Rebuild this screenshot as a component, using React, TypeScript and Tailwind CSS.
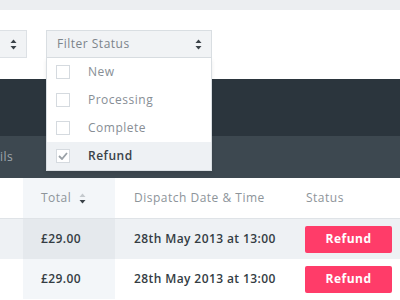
import React from "react";

const font = { fontFamily: "'Open Sans', 'Liberation Sans', sans-serif" };

function UpDown({ className = "" }: { className?: string }) {
  return (
    <svg width="7" height="11" viewBox="0 0 7 11" className={className}>
      <path d="M3.5 0.5 L6.5 4 L0.5 4 Z" fill="#3a4248" />
      <path d="M3.5 10.5 L6.5 7 L0.5 7 Z" fill="#3a4248" />
    </svg>
  );
}

const options = [
  { label: "New", checked: false },
  { label: "Processing", checked: false },
  { label: "Complete", checked: false },
  { label: "Refund", checked: true },
];

const rows = [
  { total: "£29.00", date: "28th May 2013 at 13:00", bg: "bg-[#eef1f4]", cell: "bg-[#e5e9ed]" },
  { total: "£29.00", date: "28th May 2013 at 13:00", bg: "bg-white", cell: "bg-[#f3f6f9]" },
];

export default function App() {
  return (
    <div className="w-[400px] h-[300px] overflow-hidden bg-white" style={font}>
      {/* top strip */}
      <div className="h-[10px] bg-[#eceef1]" />

      {/* filters */}
      <div className="relative h-[69px] pt-[20px] flex items-start gap-[19px]">
        <div className="w-[27px] h-[28px] bg-[#f1f3f5] border border-[#dde1e5] border-l-0 flex items-center justify-center">
          <UpDown />
        </div>
        <div className="relative w-[166px]">
          <div className="h-[28px] bg-[#f1f3f5] border border-[#d9dee2] flex items-center justify-between pl-[10px] pr-[9px]">
            <span className="text-[12px] tracking-[0.5px] text-[#7c848b]">Filter Status</span>
            <UpDown />
          </div>
          <div className="absolute left-0 top-[28px] z-10 w-[166px] bg-white border border-t-0 border-[#d9dee2] shadow-[0_2px_4px_rgba(0,0,0,0.08)]">
            {options.map((o) => (
              <div
                key={o.label}
                className={`h-[28px] flex items-center pl-[9px] ${o.checked ? "bg-[#eef1f4]" : ""}`}
              >
                <div className="w-[14px] h-[14px] border border-[#d5dadf] bg-white flex items-center justify-center">
                  {o.checked && (
                    <svg width="10" height="8" viewBox="0 0 10 8">
                      <path d="M1 4 L4 7 L9 1" stroke="#9aa1a7" strokeWidth="1.8" fill="none" />
                    </svg>
                  )}
                </div>
                <span
                  className={`ml-[18px] text-[12px] tracking-[0.5px] ${o.checked ? "text-[#3a4248] font-semibold" : "text-[#878e95]"}`}
                >
                  {o.label}
                </span>
              </div>
            ))}
          </div>
        </div>
      </div>

      {/* dark bands */}
      <div className="h-[57px] bg-[#2b353d]" />
      <div className="h-[42px] bg-[#3d4850] flex items-center">
        <span className="text-[12px] tracking-[0.5px] text-[#9ea6ad]">ils</span>
      </div>

      {/* table */}
      <div className="flex h-[41px] border-b border-[#dfe3e7] text-[12px] tracking-[0.5px] text-[#8d949a]">
        <div className="w-[23px]" />
        <div className="w-[92px] bg-[#f3f6f9] flex items-center pl-[18px]">
          <span>Total</span>
          <svg width="7" height="11" viewBox="0 0 7 11" className="ml-[8px]">
            <path d="M3.5 0.5 L6.5 4 L0.5 4 Z" fill="#c4c9ce" />
            <path d="M3.5 10.5 L6.5 7 L0.5 7 Z" fill="#3a4248" />
          </svg>
        </div>
        <div className="w-[172px] flex items-center pl-[19px]">Dispatch Date &amp; Time</div>
        <div className="flex-1 flex items-center pl-[19px]">Status</div>
      </div>
      {rows.map((r, i) => (
        <div key={i} className={`flex h-[40px] ${r.bg} text-[12px] font-semibold tracking-[0.4px] text-[#343c43]`}>
          <div className="w-[23px]" />
          <div className={`w-[92px] ${r.cell} flex items-center pl-[18px]`}>{r.total}</div>
          <div className="w-[172px] flex items-center pl-[19px] whitespace-nowrap">{r.date}</div>
          <div className="flex-1 flex items-center pl-[18px]">
            <div className="w-[87px] h-[27px] bg-[#ff3c69] rounded-[2px] flex items-center justify-center text-white font-bold tracking-[0.5px]">
              Refund
            </div>
          </div>
        </div>
      ))}
    </div>
  );
}
